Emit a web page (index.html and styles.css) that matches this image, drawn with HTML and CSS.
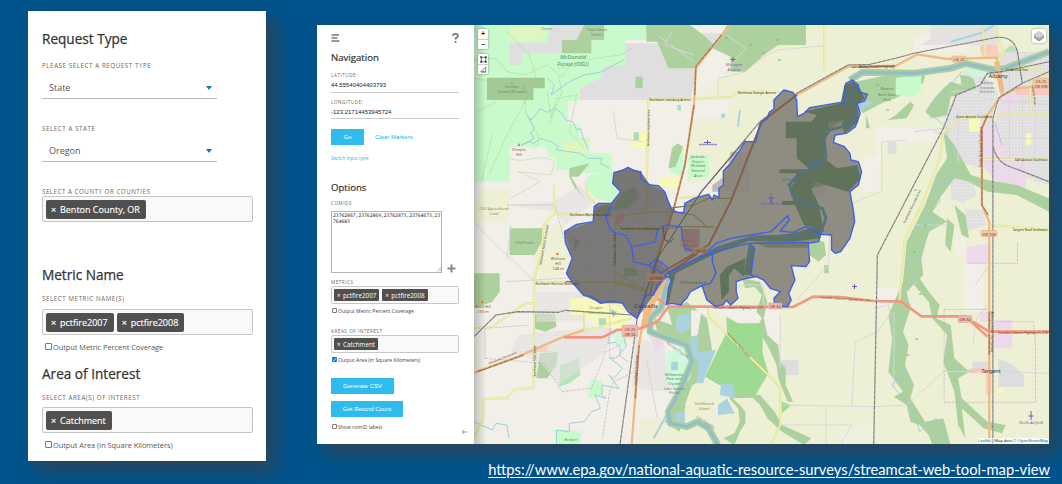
FILE: index.html
```html
<!DOCTYPE html>
<html lang="en">
<head>
<meta charset="utf-8">
<title>StreamCat Web Tool</title>
<link rel="stylesheet" href="styles.css">
</head>
<body>
<main class="slide">
  <section class="card">
    <h2 class="card-title">Request Type</h2>
    <div class="label l1">PLEASE SELECT A REQUEST TYPE</div>
    <div class="select"><span>State</span><i class="caret"></i></div>
    <div class="label l2">SELECT A STATE</div>
    <div class="select"><span>Oregon</span><i class="caret"></i></div>
    <div class="label l3">SELECT A COUNTY OR COUNTIES</div>
    <div class="tags"><span class="tag"><b>×</b>Benton County, OR</span></div>
    <h2 class="card-title t2">Metric Name</h2>
    <div class="label l4">SELECT METRIC NAME(S)</div>
    <div class="tags"><span class="tag"><b>×</b>pctfire2007</span><span class="tag"><b>×</b>pctfire2008</span></div>
    <div class="check"><i class="box"></i>Output Metric Percent Coverage</div>
    <h2 class="card-title t3">Area of Interest</h2>
    <div class="label l5">SELECT AREA(S) OF INTEREST</div>
    <div class="tags"><span class="tag"><b>×</b>Catchment</span></div>
    <div class="check"><i class="box"></i>Output Area (in Square Kilometers)</div>
  </section>

  <div class="right">
    <section class="app">
      <aside class="side">
        <div class="side-top">
          <svg width="9" height="8" viewBox="0 0 9 8"><path class="ico" d="M.5 1H8M.5 4H6.5M.5 7H8.5"/></svg>
          <svg width="7" height="10" viewBox="0 0 7 10"><path class="ico q" d="M.9 2.8C1 .3 6 .3 6 2.7C6 4.5 3.5 4.2 3.5 6.5M3.5 8V9.8"/></svg>
        </div>
        <h3 class="side-title">Navigation</h3>
        <div class="mini m1">LATITUDE:</div>
        <div class="value">44.55540404403793</div>
        <div class="mini m2">LONGITUDE:</div>
        <div class="value">-123.21714453945724</div>
        <div class="actions"><span class="btn go">Go</span><span class="link">Clear Markers</span></div>
        <div class="switch">Switch input type</div>
        <h3 class="side-title opt">Options</h3>
        <div class="mini m3">COMIDS</div>
        <div class="area-row">
          <div class="area"><span>23762867,23762869,23762873,23764673,23<br>764683</span><svg class="grip" width="6" height="6" viewBox="0 0 6 6"><path d="M1 5.5L5.5 1M3.5 5.5L5.5 3.5"/></svg></div>
          <svg class="plus" width="9" height="9" viewBox="0 0 9 9"><path d="M4.5 .5V8.5M.5 4.5H8.5"/></svg>
        </div>
        <div class="mini m4">METRICS</div>
        <div class="stags"><span class="stag"><b>×</b>pctfire2007</span><span class="stag"><b>×</b>pctfire2008</span></div>
        <div class="scheck"><i class="sbox"></i>Output Metric Percent Coverage</div>
        <div class="mini m5">AREAS OF INTEREST</div>
        <div class="stags"><span class="stag"><b>×</b>Catchment</span></div>
        <div class="scheck"><i class="sbox on"><svg width="5" height="5" viewBox="0 0 5 5"><path d="M.8 2.5L2 3.8L4.2 1.1"/></svg></i>Output Area (in Square Kilometers)</div>
        <span class="btn csv">Generate CSV</span>
        <span class="btn rec">Get Record Count</span>
        <div class="last"><div class="scheck"><i class="sbox"></i>Show comID labels</div>
        <svg class="back" width="7" height="6" viewBox="0 0 7 6"><path d="M6.5 3H1M3.3 .7L1 3L3.3 5.3"/></svg></div>
      </aside>

      <div class="map">
        <svg class="map-svg" width="575" height="419" viewBox="0 0 575 419">
          <defs>
            <pattern id="orchard" width="8" height="9" patternUnits="userSpaceOnUse"><rect width="8" height="9" fill="#9fdb93"/><circle cx="3" cy="3" r="1.4" fill="#84c97d"/></pattern>
            <pattern id="streets" width="17" height="19" patternUnits="userSpaceOnUse"><rect width="17" height="19" fill="#dddcdc"/><path d="M0 4H17M4 0V19M12 0V19M0 13H17" stroke="#efeeed" stroke-width="1.2"/></pattern>
            <pattern id="darkst" width="16" height="18" patternUnits="userSpaceOnUse"><path d="M0 5H16M5 0V18M12 0V18M0 13H16" stroke="#9a9896" stroke-width="1" fill="none"/></pattern>
            <linearGradient id="edge"><stop offset="0" stop-color="#000" stop-opacity=".2"/><stop offset="1" stop-color="#000" stop-opacity="0"/></linearGradient>
          </defs>
          <g class="geo" transform="scale(.36671 .33333)">
            <rect width="1568" height="1260" fill="#f2efe9"/>
            <!-- farmland -->
            <g fill="#eef0d5">
              <path d="M690 0H1568V1260H500L560 1160L590 1040L620 940L640 850L560 840L700 470L580 500L590 330L610 215L690 140Z"/>
              <path d="M160 610L245 590L270 700L230 760H160Z"/><path d="M30 490H95V590H0V530Z"/>
              <path d="M455 1180H520V1260H440Z"/>
            </g>
            <g fill="#f2efe9">
              <path d="M600 225H700L690 280H600ZM1095 305H1260L1250 350H1110L1105 500H1060V395H1100ZM640 850H835V1000L780 930L700 880ZM560 480L680 460V500L570 560ZM1100 790H1160V850H1100ZM1340 690H1390V860H1340ZM1260 20H1350V80H1200V40Z"/>
              <path d="M1310 690H1345V620H1310ZM1000 1200H1090V1260H1000Z" opacity=".5"/>
            </g>
            <!-- forest reserve -->
            <path fill="#c8facc" d="M0 0H520V45H415V125H355V190H288V228H256V298H288V340H315V385H375V445H300V435H225V395H200V365H97V470H0Z"/>
            <path fill="#c8facc" d="M315 450L385 440L380 480L405 500L390 535L330 520L300 480Z"/>
            <g fill="#e0dfdf">
              <path d="M210 0H300V45H245V85H130V120H97V52H200ZM412 55H545L600 25H680L605 140L590 225H288V190L345 160L355 125L412 120Z"/>
              <path d="M1245 0H1430V60H1220L1245 40ZM1255 235H1300V280H1240ZM1380 0H1410V80H1380Z" opacity=".8"/>
            </g>
            <path fill="#def6c0" d="M97 0H200V30L160 52H97ZM245 350L310 345V385H240Z"/>
            <path fill="#add19e" d="M300 0H355V45H320V85H240V45H280ZM470 0H590L625 30L655 60L600 130H530L500 50H470ZM690 0H905V60H830L790 90L740 140H700V95L650 70ZM440 155H460V190H440ZM97 610H190V640L165 690H97ZM0 745H70V800L50 830L0 850ZM163 865L220 868L225 905L195 920L163 910ZM180 985L230 980L225 1020L200 1060H170Z"/>
            <path fill="#a3ca94" d="M35 158H193V190H162V225H35Z"/>
            <path fill="#add19e" d="M260 430L315 415L285 455H265L300 520L275 490L260 455Z"/>
            <path fill="#b5e3b5" d="M235 1020L285 1000L290 1050L260 1075L232 1085ZM1430 90L1465 60L1485 75V130H1430Z"/>
            <path fill="#c8facc" d="M540 360L570 370V455L535 440ZM585 390H640V460H585ZM320 1060L350 1070V1110L310 1120ZM218 1215L290 1218V1260H230Z"/>
            <path fill="#add19e" d="M540 370L555 355L570 365L550 425L530 430Z"/>
            <!-- residential areas -->
            <path fill="url(#streets)" opacity=".6" d="M90 540L215 530L290 480L330 530L250 600L220 560ZM120 930L380 900L360 980L230 1080L180 1010L100 980ZM440 940L520 960L530 1100L430 1090ZM170 800H300V890H170Z"/>
            <path fill="url(#streets)" d="M1340 130L1390 150L1430 200L1400 350L1380 430L1320 410L1280 300L1310 220ZM1430 80H1568V480L1440 440L1420 300L1440 180ZM1300 460L1360 455L1370 510L1335 535L1300 520ZM1340 550L1390 555L1395 600L1340 620Z"/>
            <path fill="#dedddd" d="M1430 1000L1470 1020L1500 1050V1085H1430ZM1360 1010H1405V1040H1360ZM1128 350H1152V388H1128ZM835 1005H885V1050H840Z"/>
            <path fill="#ecd9e9" d="M1385 300H1430L1450 390H1505V490L1440 480L1390 430ZM1440 195L1490 215L1440 280ZM1343 665L1405 655V715H1343ZM1420 885H1468V970H1420ZM1380 860H1410V890H1380ZM475 930L520 950L500 980Z"/>
            <path fill="#ffc0b0" opacity=".7" d="M1380 60H1430V100H1385ZM1470 185H1568V210H1480ZM1350 1030H1405V1045H1350ZM1395 1030H1410V1110H1395ZM165 965H200V980H165ZM440 840L470 810L500 850L470 870Z"/>
            <path fill="#f8f8bd" d="M430 320H475V370H430ZM1350 280H1380V320H1350ZM260 820H400L430 870L400 910L340 905L300 870H260ZM500 455H560V490H510ZM1505 325H1520V360H1505ZM1425 1090H1445V1102H1425Z"/>
            <path fill="#aadbc3" d="M435 322H450V345H435ZM340 880H360V900H340ZM555 240H564V256H555ZM370 850L390 860L380 880Z"/>
            <!-- riparian woods -->
            <g fill="#add19e">
              <path d="M1040 170L1150 145L1230 150L1225 175L1150 220L1120 230L1060 265L1040 230Z"/>
              <path d="M1115 295L1150 270L1190 230L1200 240L1180 280L1130 285ZM1070 270L1080 310H1068Z"/>
              <path d="M1255 220L1280 190L1300 170L1330 180L1325 150L1360 155L1370 190L1320 210L1300 215L1290 270L1250 280L1230 260Z"/>
              <path d="M1280 320L1310 360L1355 450L1400 465L1480 480L1568 520V560L1480 510L1400 500L1350 470L1310 460L1270 520L1250 560L1290 590L1240 620L1220 700L1225 750L1180 800L1190 850L1170 920L1185 960L1175 1020L1200 1080L1190 1120L1230 1190L1280 1180L1300 1260H1250L1240 1230L1215 1200L1190 1190L1180 1140L1145 1115L1170 1100L1130 1040L1140 940L1130 870L1170 770L1180 650L1230 540L1260 450L1290 400Z"/>
              <path d="M1215 760L1240 800L1270 840L1260 880L1300 900L1310 1000L1350 1040L1320 1060L1330 1120L1400 1190L1450 1200L1440 1225L1390 1210L1330 1150L1340 1240L1320 1200L1310 1100L1280 1010L1290 930L1250 880L1240 830L1200 780Z"/>
              <path d="M1310 540L1340 570L1350 640L1330 630ZM1290 580L1310 600L1300 680L1285 660Z"/>
              <path d="M915 640L955 650L960 690L940 710L915 690ZM955 720H967V745H955Z"/>
              <path d="M525 840L550 850L580 830L635 880L650 980L630 1050L600 1080L580 1130L560 1220L520 1190L570 1090L590 1000L560 960L500 920L490 880L540 900Z"/>
              <path d="M730 760L780 770L800 830L790 880L800 930L830 960L835 1010L850 1030L850 1080L870 1130L855 1130L830 1060L825 1020L800 960L770 910L785 880L770 860L785 810L765 785L740 790Z"/>
              <path d="M700 1100L780 1110L820 1160L840 1200L920 1240L900 1260L840 1220L800 1180L780 1140L760 1118L705 1120L725 1140L740 1160V1195L725 1220L710 1260L680 1240L710 1225L725 1190L720 1150L695 1120Z"/>
            </g>
            <path fill="#c8facc" d="M1150 160L1220 140V200L1195 215L1150 210Z"/>
            <path fill="#f2efe9" d="M592 855L620 860L610 930L592 935ZM600 1080L650 1040L700 1100L695 1150L660 1170L590 1180L585 1130Z"/>
            <path fill="#eef0d5" d="M595 1080L640 1060L690 1110L660 1140V1190L600 1185L575 1140Z"/>
            <path fill="url(#orchard)" d="M688 875L720 895H787V985L803 1045L765 1115L700 1100L630 1055L665 975L690 920Z"/>
            <path fill="#9edc90" d="M838 1130L865 1140L840 1165Z"/>
            <path fill="#cff8dc" d="M375 920H415V960H390ZM530 980L575 960L595 1010L590 1060L560 1100L520 1060Z"/>
            <path fill="#cff5dc" d="M1345 110L1410 125L1400 150L1360 160L1340 140Z"/>
            <!-- lakes -->
            <path fill="#aad3df" d="M555 870L590 865L590 910L565 925L550 910ZM585 945L610 930V980L660 975L635 1040L625 1075H608L612 1010L590 980ZM675 1075L710 1080V1120L670 1110ZM665 1140L690 1120L710 1165L665 1170ZM545 1165L575 1160V1195L550 1190ZM538 1010H556V1035H538ZM674 266H685V278H674ZM1045 230L1060 215L1085 235L1050 260Z"/>
            <path class="w2" d="M725 255L720 305"/>
            <!-- small contour trails -->
            <g class="trail">
              <path d="M0 105L60 100L90 140L140 150L200 120L240 155L270 110M55 190L100 220L140 225L90 330L40 450M140 225C130 300 210 330 160 370M200 200L210 280L225 220L280 210L260 320L300 370M10 260L60 230M50 330L20 470M97 400C140 420 180 380 220 410L210 450L120 440L180 470L100 520M90 20L150 90L170 160M0 160L50 170M230 130L330 100L400 90L430 70M230 150L240 200L205 300"/>
            </g>
            <g class="minor">
              <path d="M500 30L600 110M540 20L520 60L600 90M690 30L740 70L700 120M665 220V160L700 152L740 140L790 95L830 75L955 62M1112 350V500L1060 520L1015 545L970 620L967 720L880 825M1112 350L1180 345M1240 310L1280 330M1200 320L1280 310M835 1140L1090 1145L1180 1140L1280 1040L1405 1038L1568 1045M1090 850L1130 840L1135 870L1100 920L1040 950L1030 1145M960 1145V1260M835 1200H1030L1000 1260M1145 860V1090M370 770V1000M470 1000L500 1180M0 590L50 650L100 700L165 770M380 260L390 340L460 350M90 700L100 600M1368 780L1405 720M1360 960L1370 880L1400 840M720 780H790V840M835 870V1030"/>
              <path d="M1200 600L1290 600M1320 410V250M1385 220L1568 240M1460 140V400M1495 160V440M1530 140V400M1440 230H1568M1440 340H1568M1300 200L1420 190"/>
            </g>
            <!-- municipal boundaries -->
            <path class="bound" d="M90 540H220L250 660M1282 853H1405V750M1282 853V1132H1531V950L1525 890H1425M1345 715H1482V650M30 1000V910L150 900M30 1000L190 1015L240 1100L320 1090L360 980L400 960M440 1040L380 1070L370 1100L350 1240M90 770L245 760L330 740"/>
            <!-- waterways -->
            <path class="w1" d="M200 160L220 180L210 210L260 170L300 150L350 140L380 120L410 105M145 270L155 285L165 275L180 250L200 262L220 250L240 265L250 285L270 290L280 315L290 310L300 345L310 370M130 360L150 350L165 355L180 340L210 350L230 365L225 375L260 380L290 385L310 400L350 400L345 415L370 430M150 280L165 310L155 325L165 340L130 360"/>
            <path class="w1" d="M372 910L365 955L385 952L400 970L398 990L385 1000L370 998L405 1030L380 1060L368 1050L395 1090L370 1085L350 1080L348 1110L360 1120L330 1110L345 1150L320 1160L300 1190L260 1195L260 1220L225 1215V1260M0 1190L50 1215L60 1195L90 1200L95 1240M410 940L415 965L395 990L420 1010"/>
            <path class="w1" d="M1330 140L1300 180L1260 230L1240 260L1290 310L1290 350L1310 420L1290 480L1260 470L1270 530L1210 610L1260 570L1210 700L1180 720L1210 760L1160 810L1190 840L1140 900L1175 940L1140 990L1175 1040L1140 1080L1200 1160L1215 1220L1260 1180L1290 1250M1315 1030L1365 1040M1420 290L1440 360"/>
            <path class="riverbank" d="M1025 165L1060 142L1200 145L1300 130L1340 115L1420 135L1450 130L1568 80"/>
            <path class="river" d="M1025 165L1060 142L1200 145L1300 130L1340 115L1420 135L1450 130L1568 80"/>
            <path class="w2" d="M1300 50L1380 25L1420 0M530 1160L490 1240"/>
            <path class="riverbank" d="M530 750L510 850L480 880L480 920L540 945L580 960L595 1010L560 1100L530 1160L535 1195L580 1205L610 1190L640 1210L665 1260"/>
            <path class="river" d="M530 750L510 850L480 880L480 920L540 945L580 960L595 1010L560 1100L530 1160L535 1195L580 1205L610 1190L640 1210L665 1260"/>
            <!-- yellow secondary roads -->
            <g>
              <g class="ycase"><path d="M475 225L590 222L700 215L720 200H835M475 225L472 450L470 500"/><path d="M955 0V135M638 850L640 875L835 1085V1200L810 1260M190 600L185 680L165 760L162 1090L110 1092L90 1120L25 1122V1180L0 1240M190 600L220 565L380 575M220 565L218 480M165 772L290 770L380 780L470 810M300 915V860M245 935L340 905L430 880M0 910L50 905L140 835L160 835M305 475L310 510L335 540M1385 0L1395 80L1390 100M1420 0L1445 85L1425 110M1160 830L1175 640L1220 540L1270 400L1280 325L1330 280L1440 270H1568M1385 403H1568M1405 600L1470 605L1568 615M1450 140L1530 125L1568 160M1513 140L1520 255M560 520L640 510"/></g>
              <g class="yroad"><path d="M475 225L590 222L700 215L720 200H835M475 225L472 450L470 500"/><path d="M955 0V135M638 850L640 875L835 1085V1200L810 1260M190 600L185 680L165 760L162 1090L110 1092L90 1120L25 1122V1180L0 1240M190 600L220 565L380 575M220 565L218 480M165 772L290 770L380 780L470 810M300 915V860M245 935L340 905L430 880M0 910L50 905L140 835L160 835M305 475L310 510L335 540M1385 0L1395 80L1390 100M1420 0L1445 85L1425 110M1160 830L1175 640L1220 540L1270 400L1280 325L1330 280L1440 270H1568M1385 403H1568M1405 600L1470 605L1568 615M1450 140L1530 125L1568 160M1513 140L1520 255M560 520L640 510"/></g>
            </g>
            <!-- orange primary roads -->
            <path class="orange" d="M700 0L605 125L600 240L575 420L545 550L490 720L470 830L450 960L430 1260M640 660L700 530L750 400L785 290L880 210L1020 125L1150 122L1210 88L1290 102L1425 98L1435 170L1440 210L1400 270L1385 310V540L1405 590V1260M1440 210L1480 190L1568 180M0 1043L120 995L245 935L300 915M500 750L640 660"/>
            <path class="orange wide" d="M1425 110L1440 200M490 820L460 910M520 765L490 830"/>
            <path class="brown" d="M675 30L605 125L602 210M600 240L575 420L545 550L490 720L480 810M790 290L880 210M1030 127L1150 122M10 1040L135 990M1400 270L1385 310V540L1402 570M1405 860V990M440 1120L450 960"/>
            <path class="red" d="M245 937H350L390 915L455 910L500 890L530 845H640L870 846L925 815L1000 816L1090 828L1165 830L1220 874H1340L1400 935M1360 890L1405 920H1568M525 840L500 820"/>
            <!-- railways -->
            <path class="rail" d="M0 935L60 870L120 860L230 862L250 856L430 870L445 880M398 1260L445 880L500 700L620 500L780 290L880 205L1020 120L1080 118L1150 100L1200 85L1420 38Q1470 30 1482 80L1495 175M1568 110L1440 140L1400 145L1380 180L1315 210L1280 310L1100 690L1090 1260M1415 1260V280L1430 220L1495 175L1568 140M1415 360Q1420 400 1450 420L1568 470"/>
            <path class="rail-dash" d="M0 935L60 870L120 860L230 862L250 856L430 870L445 880M398 1260L445 880L500 700L620 500L780 290L880 205L1020 120L1080 118L1150 100L1200 85L1420 38Q1470 30 1482 80L1495 175M1568 110L1440 140L1400 145L1380 180L1315 210L1280 310L1100 690L1090 1260M1415 1260V280L1430 220L1495 175L1568 140M1415 360Q1420 400 1450 420L1568 470"/>
            <!-- catchments -->
            <path fill="#8f8d82" d="M382 442L402 438L420 427L435 438L455 440L455 462L480 480L503 482L520 500L530 530L540 555L555 562H572L575 535L600 520L640 508L650 525L655 510L668 518V490L680 480V438L700 415L740 350H768L780 295L800 280L805 262L818 252V225L845 195L870 202L880 225L882 275L900 265L915 248L1000 232L1008 240L1014 175L1032 165L1048 180L1050 200L1073 208L1065 228L1045 235L1053 265L1040 305L1015 325L985 330L980 352L1010 365L1025 385L1028 405L1048 410L1057 440L1048 480L1025 500L1035 560L1038 590L1025 640L1000 680L985 685L975 675L975 630L945 628L940 650L912 655L915 710L905 725L865 722L875 765L858 805L865 825L855 845L820 843L818 820L835 800L808 790L790 765L770 755L735 762L715 770V800L720 820L700 840L688 825L680 838L660 845L635 825L622 782L590 800L580 820L570 830L565 840L540 835L525 838L530 790L540 760L525 755L500 780L490 810L470 810L445 880L420 860L405 835L375 828L345 835L320 815L300 812L270 775L252 745L268 700L250 655L247 620L280 598L325 590L328 545L340 535L375 535L400 500L378 475Z"/>
            <path fill="#787776" d="M382 442L420 427L455 440L480 480L520 500L540 555L500 700L530 745L490 810L445 880L405 835L345 835L300 812L252 745L268 700L247 620L325 590L328 545L375 535L400 500L378 475Z"/>
            <path fill="url(#darkst)" opacity=".32" d="M330 590L530 540L500 700L490 810L445 870L345 825L260 745L268 620Z"/>
            <g fill="#60725a">
              <path d="M850 290H920L935 270L900 260L1000 235L1010 180L1035 170L1050 185L1065 220L1045 240L1048 290L1010 325L1000 290L960 320L955 400L990 430L1045 420L1055 460L1020 500L960 480L920 490L940 540L955 620L900 600L875 540H840V528H870L865 490L885 445H833V433H915L880 400V340H850Z"/>
              <path d="M530 745L640 680L750 640L870 625L945 600L945 640L870 650L750 648L650 690L550 745L530 835H525L535 770ZM670 750L690 725L740 700L735 755L710 730L695 750V800L675 825ZM750 655L765 670L755 750L735 750Z"/>
              <path d="M400 505L440 485L450 520L420 550L380 555ZM350 540L380 545L370 570L330 560ZM410 730L440 730L450 750L410 755ZM270 640L290 645L275 680ZM760 650H910V668H800Z" opacity=".65"/>
            </g>
            <path fill="#8a837b" d="M965 290L1010 285L1000 310L970 320ZM930 470L960 480L950 520L920 510ZM700 380H750V500H650V480L690 450Z" opacity=".5"/>
            <path fill="#885f63" opacity=".6" d="M385 575L410 565V585L390 598ZM565 612H615V680H575Z"/>
            <path class="inwater" d="M1032 170L1028 230L1045 265L1025 300L970 315L955 340L960 400L930 430L885 445L860 480L870 515L900 535L950 550L960 580L945 625L860 635L760 635L660 670L535 745M755 660L748 745"/>
            <path fill="#56717a" d="M915 405L945 400L940 425L910 430Z"/>
            <path class="inroad" d="M385 575L470 562L540 560L600 570L640 610M385 790V590L400 610H520M385 770L470 790M470 480L472 530L460 560M480 740L530 610L570 605H655M250 770L380 772L475 800M530 550L600 540L640 520H700M385 740L470 800"/>
            <path class="inorange" d="M545 550L500 700L480 810M500 750L640 660L700 530L785 290L880 210M528 745L610 685"/>
            <path class="inrail" d="M445 880L500 700L620 500L740 346M515 600L520 645L535 652L545 640"/>
            <path class="catch" d="M382 442L402 438L420 427L435 438L455 440L455 462L480 480L503 482L520 500L530 530L540 555L555 562H572L575 535L600 520L640 508L650 525L655 510L668 518V490L680 480V438L700 415L740 350H768L780 295L800 280L805 262L818 252V225L845 195L870 202L880 225L882 275L900 265L915 248L1000 232L1008 240L1014 175L1032 165L1048 180L1050 200L1073 208L1065 228L1045 235L1053 265L1040 305L1015 325L985 330L980 352L1010 365L1025 385L1028 405L1048 410L1057 440L1048 480L1025 500L1035 560L1038 590L1025 640L1000 680L985 685L975 675L975 630L945 628L940 650L912 655L915 710L905 725L865 722L875 765L858 805L865 825L855 845L820 843L818 820L835 800L808 790L790 765L770 755L735 762L715 770V800L720 820L700 840L688 825L680 838L660 845L635 825L622 782L590 800L580 820L570 830L565 840L540 835L525 838L530 790L540 760L525 755L500 780L490 810L470 810L445 880L420 860L405 835L375 828L345 835L320 815L300 812L270 775L252 745L268 700L250 655L247 620L280 598L325 590L328 545L340 535L375 535L400 500L378 475Z"/>
            <path class="catch" d="M375 540L360 575L370 610L380 622L415 632L430 665L465 658L495 650L500 615L525 600L565 605L568 640L575 670L610 682L635 680L660 655L700 640L810 620L855 572L860 585L835 618L870 622L905 605L945 628M430 665L435 710L475 722L498 702L525 725L530 745L580 715L650 682L750 655L912 652M650 685V710L660 745L645 775L622 782M750 655L765 670L755 750L770 755M475 722L500 735L525 755"/>
          </g>
          <rect width="12" height="419" fill="url(#edge)"/>
          <!-- place names -->
          <g class="txt">
            <g class="green" font-size="5.8"><text x="99" y="34">McDonald</text><text x="99" y="41">Forest (OSU)</text></g>
            <g class="green small"><text x="413" y="65">Bowers</text><text x="413" y="71">Rock State</text><text x="413" y="76">Park</text><text x="224" y="133">Jackson-</text><text x="224" y="137.7">Frazier</text><text x="224" y="142.4">Wetland</text><text x="224" y="147.1">Natural</text><text x="224" y="151.8">Area</text><text x="200" y="350.5">Willamette</text><text x="200" y="355.2">Park and</text><text x="200" y="360">Crystal</text><text x="200" y="364.7">Lake Sports</text><text x="200" y="369.4">Fields</text><text x="97" y="416">Herbert</text></g>
            <g class="gray small"><text x="73" y="4.500">Dunn</text><text x="123" y="6">Tract State</text><text x="123" y="11">Forest</text><text x="38" y="63">Dunker</text><text x="38" y="68">Forest (Private)</text><text x="50" y="219">Old Pond</text><text x="513" y="59">Albany</text><text x="513" y="63.7">historic</text><text x="513" y="68">districts</text></g>
            <g class="olive small"><text x="20" y="185">OSU Agricultural</text><text x="20" y="190">Land</text><text x="230" y="380">Stahlbusch</text><text x="230" y="385">Island</text><text x="122" y="284">Oregon</text><text x="128" y="289">State University</text></g>
            <text class="infarm" x="219" y="259">OSU Farmland</text>
            <g class="purple small"><text x="260" y="41">McLagan</text><text x="260" y="46">Airstrip</text><text x="298" y="180">Winn Airfield</text><text x="557" y="399">Grells Airfield</text></g>
            <g class="blue small"><text x="317" y="156">Willamette</text><text x="317" y="161">River</text></g>
            <g class="peak small"><text x="45" y="126">Dimple</text><text x="45" y="131">Hill</text><text x="84" y="235">Witham</text><text x="84" y="240">Hill</text><text x="84" y="245">148 m</text><text x="9" y="283">Bald Hill</text><text x="9" y="288">230 m</text></g>
            <g class="place"><text x="524" y="53">Albany</text><text x="172" y="283">Corvallis</text><text x="517" y="348" font-size="5">Tangent</text></g>
            <g class="road"><text x="196" y="76">Northwest Lewisburg Avenue</text><text x="283" y="68.5">Northeast Granger Avenue</text><text x="116" y="191">Northwest Walnut Boulevard</text><text x="166" y="205">Northwest Circle Boulevard</text><text x="83" y="260">Northwest Harrison Boulevard</text><text x="500" y="93">Queen Avenue Southwest</text><text x="557" y="136">34th Avenue Southeast</text><text x="556" y="206">Tangent Road Southwest</text><text x="543" y="46">1st Avenue East</text><text class="tan" x="403" y="42.5">Albany-Corvallis Highway</text><text class="tan" x="264" y="284">Corvallis-Lebanon Highway no. 210</text><text class="tan" transform="translate(371 275) rotate(4)">Corvallis-Lebanon Highway no. 210</text><text class="tan" x="549" y="309">Corvallis-Lebanon Highway no. 210</text>
              <text transform="translate(175.5 103) rotate(-89)">Northwest Highland Drive</text><text transform="translate(71 220) rotate(-80)">Northwest Walnut Boulevard</text><text transform="translate(61.5 336) rotate(-90)">Southwest 53rd Street</text><text transform="translate(264 321) rotate(47)">Southeast Peoria Road</text><text transform="translate(439 182) rotate(-64)">Southwest Riverside Drive</text><text transform="translate(142 224) rotate(-90)">Northwest 29th Street</text><text class="tan" transform="translate(163 345) rotate(-87)">Southwest 3rd Street</text><text class="tan" transform="translate(29 334) rotate(-22)">Philomath Boulevard</text><text class="tan" transform="translate(516.5 307) rotate(90)">Albany-Junction City Highway</text><text class="tan" transform="translate(508 122) rotate(-90)">Pacific Boulevard Southwest</text><text transform="translate(559 70) rotate(83)">Waverly Drive</text><text class="bord" transform="translate(203 326) rotate(35)">Benton County</text><text class="bord" transform="translate(231 398) rotate(33)">Linn County</text></g>
            <g class="hw"><rect x="478" y="31" width="14" height="6"/><text x="485" y="36">US 20</text><rect x="507" y="205.5" width="16" height="6"/><text x="515" y="210.5">OR 99E</text><rect class="r" x="484" y="290.5" width="14" height="7"/><text x="491" y="296">OR 34</text><rect class="r" x="148" y="300" width="16" height="12"/><text x="156" y="305.5">US 20</text><text x="156" y="310.5">OR 34</text><rect class="r" x="294" y="278" width="14" height="6"/><text x="301" y="283">OR 34</text><rect x="559" y="53" width="16" height="10"/><text x="567" y="57.5">US 20</text><text x="567" y="62.5">OR 99E</text><rect class="d" x="174" y="249.5" width="16" height="6"/><text x="182" y="254.5">OR 99W</text><rect class="d" x="220" y="223" width="13" height="5"/><text x="227" y="227.5">US 20</text></g>
            <g class="peak small"><text x="214" y="217">Hewlett</text><text x="214" y="222">Packard</text></g>
          </g>
          <g class="plane"><path d="M297 168V178M293.5 173H300.5M296 177H298.5"/><path d="M259 32V37M256.5 34.5H261.5M233.5 115V120M230 117.5H237M557 386V395M554.5 391H559.5M380.5 259V264M378 261.5H383"/></g>
          <path d="M225 119.500H243" stroke="#9c91c4" stroke-width="1.5"/>
          <path d="M45 118L46.5 121H43.5ZM83.500 227L85 230H82ZM8 275L9.500 278H6.500Z" fill="#db7638"/>
          <!-- tree marks -->
          <g class="trees"><path d="M275 20h3m10 8h3m-40-15h3m48 2h3m-1 20h3M36 58h3m9 5h3M402 60h3m7 25h3M440 165h3m7 35h3m-14 27h3m3 42h3m-7 45h3m-12 16h3"/></g>
        </svg>
        <div class="zoom"><span>+</span><span>−</span></div>
        <div class="tools">
          <span><svg width="8" height="8" viewBox="0 0 8 8"><path d="M1.500 1.500H6.500V6.500H1.500Z"/><path class="nodes" d="M.3 .3H2.500V2.500H.3ZM5.500 .3H7.700V2.500H5.500ZM.3 5.500H2.500V7.700H.3ZM5.500 5.500H7.700V7.700H5.500Z"/></svg></span>
          <span><svg width="8" height="8" viewBox="0 0 8 8"><path d="M1 6.500L6.500 1V6.500ZM1 7H7"/></svg></span>
        </div>
        <div class="layers"><svg width="12" height="12" viewBox="0 0 12 12"><path fill="#999" d="M1 6L6 9L11 6V8L6 11.500L1 8Z"/><path fill="#b5b5b5" d="M1 4L6 7L11 4V6.500L6 9.500L1 6.500Z"/><path fill="#d2d2d2" d="M6 .8L11 4L6 7.200L1 4Z"/></svg></div>
        <div class="attr"><b>Leaflet</b> | Map data © <b>OpenStreetMap</b></div>
      </div>
    </section>
    <div class="url">https://www.epa.gov/national-aquatic-resource-surveys/streamcat-web-tool-map-view</div>
  </div>
</main>
</body>
</html>
```
FILE: styles.css
```css
* { box-sizing: border-box; }
body { margin: 0; font-family: "Open Sans", sans-serif; overflow: hidden; }
h2, h3 { margin: 0; font-weight: 400; }
.slide { width: 1062px; height: 484px; background: #00528a; display: flex; align-items: flex-start; padding-left: 28px; gap: 51px; }
.card { width: 238px; height: 450px; margin-top: 11px; padding: 15px 13px 0 14px; background: #fff; color: #333; box-shadow: 9px 9px 15px 1px #29465c; flex: none; }
.card-title { height: 24px; line-height: 25px; font-size: 13.6px; color: #333; -webkit-text-stroke: .25px #333; white-space: nowrap; }
.label { height: 10px; line-height: 10px; font-size: 6.2px; letter-spacing: .58px; color: #666; white-space: nowrap; }
.l1 { margin-top: 11px; }
.l2 { margin-top: 25px; }
.l3 { margin-top: 25px; height: 9px; letter-spacing: .52px; }
.l4 { margin-top: 8px; margin-bottom: 5px; }
.l5 { margin-top: 8px; margin-bottom: 5px; }
.select { width: 175px; height: 21px; margin-top: 7px; padding: 0 5px 1px 7px; border-bottom: 1px solid #bbb; display: flex; align-items: center; justify-content: space-between; font-size: 9px; color: #555; }
.caret { border: 3px solid transparent; border-top: 4px solid #0b7abf; border-bottom: 0; }
.tags { height: 26px; border: 1px solid #c4c4c4; border-radius: 2px; background: #f9f9f7; padding: 3px; display: flex; gap: 3px; }
.tag { height: 19px; padding: 0 6px 0 5px; border-radius: 2px; background: #505050; color: #fff; display: flex; align-items: center; font-size: 9px; white-space: nowrap; -webkit-text-stroke: .15px #fff; }
.tag b { width: 9px; font-weight: 400; font-size: 9px; }
.t2 { margin-top: 40px; }
.t3 { margin-top: 5px; }
.check { height: 18px; margin-top: 3px; padding-left: 3px; display: flex; align-items: center; gap: 1px; font-size: 7.35px; color: #555; white-space: nowrap; }
.box { width: 7px; height: 7px; border: 1px solid #777; border-radius: 1px; margin-bottom: 1px; }
.l5 + .tags { margin-top: -1px; }

.right { width: 733px; padding-top: 25px; flex: none; }
.app { width: 732px; height: 419px; display: flex; background: #fff; box-shadow: 9px 9px 15px 1px #29465c; }
.side { width: 157px; height: 419px; padding: 7px 15px 0 13px; flex: none; color: #333; }
.side > * { margin-left: 1px; }
.side-top { height: 11px; display: flex; align-items: center; justify-content: space-between; }
.ico { stroke: #777; stroke-width: 1.4; fill: none; }
.q { stroke-width: 1.8; }
.side-title { height: 16px; line-height: 16px; margin-top: 7px; font-size: 9.6px; -webkit-text-stroke: .2px #333; }
.mini { height: 8px; line-height: 8px; font-size: 4.6px; letter-spacing: .54px; color: #666; white-space: nowrap; }
.m1 { margin-top: 5px; }
.m2 { margin-top: 5px; }
.m3 { margin-top: 3px; }
.m4 { margin-top: 5px; }
.m5 { margin-top: 11px; }
.value { height: 14px; line-height: 13px; padding-bottom: 1px; border-bottom: 1px solid #ccc; font-family: "Liberation Sans", sans-serif; font-size: 6px; color: #222; }
.m2 + .value { height: 13px; }
.actions { display: flex; align-items: center; margin-top: 10px; gap: 11px; }
.btn { display: flex; align-items: center; justify-content: center; height: 16px; background: #2fbbed; color: #fff; font: 6px "Liberation Sans", sans-serif; white-space: nowrap; }
.go { width: 33px; }
.link { font: 6px "Liberation Sans", sans-serif; color: #22b5ea; }
.switch { margin-top: 8px; height: 10px; line-height: 10px; font-size: 4.7px; color: #22b5ea; }
.side .opt { margin-top: 17px; }
.area-row { display: flex; align-items: flex-end; gap: 5px; margin-top: 4px; }
.area { width: 111px; height: 62px; border: 1px solid #b3b3b3; padding: 1px 0 0 1px; font: 4.7px/6px "DejaVu Sans Mono", monospace; color: #222; display: flex; justify-content: space-between; white-space: nowrap; }
.area span { width: 103px; }
.grip { flex: none; align-self: flex-end; stroke: #888; stroke-width: .6; fill: none; }
.plus { stroke: #888; stroke-width: 2; }
.stags { width: 128px; height: 18px; border: 1px solid #c7c7c7; border-radius: 1.5px; background: #f9f9f7; padding: 2px; display: flex; gap: 3px; }
.stag { height: 12px; border-radius: 1px; background: #505050; color: #fff; padding: 0 3px; display: flex; align-items: center; font-size: 6.3px; white-space: nowrap; }
.stag b { width: 6px; font-weight: 400; }
.scheck { height: 11px; margin-top: 1px; padding-left: 1px; display: flex; align-items: center; gap: 1px; font-size: 5.05px; color: #444; white-space: nowrap; }
.sbox { width: 5px; height: 5px; border: .6px solid #777; border-radius: 1px; }
.sbox.on { background: #0b74e5; border: 0; display: flex; }
.sbox svg { fill: none; stroke: #fff; stroke-width: .8; }
.csv { width: 63px; margin-top: 13px; }
.rec { width: 72px; margin-top: 7px; }
.last { display: flex; justify-content: space-between; align-items: flex-start; margin-right: -9px; margin-top: 3px; }
.back { margin-top: 9px; fill: none; stroke: #888; stroke-width: .8; }

.map { width: 575px; height: 419px; position: relative; overflow: hidden; flex: none; }
.map-svg { display: block; }
.geo path { vector-effect: non-scaling-stroke; stroke-linejoin: round; }
.geo pattern path { vector-effect: none; }
.trail path { fill: none; stroke: #a8ca83; stroke-width: .7; stroke-dasharray: 1.5 1; }
.minor path { fill: none; stroke: #d9d7dc; stroke-width: 1; }
.bound { fill: none; stroke: #c3b5c3; stroke-width: .7; stroke-dasharray: 3 1; }
.w1 { fill: none; stroke: #98cbd8; stroke-width: .9; }
.w2 { fill: none; stroke: #aad3df; stroke-width: 2; }
.riverbank { fill: none; stroke: #add19e; stroke-width: 7; }
.river { fill: none; stroke: #94bdcb; stroke-width: 3.2; }
.ycase path { fill: none; stroke: #d5d794; stroke-width: 2; }
.yroad path { fill: none; stroke: #f2f2a4; stroke-width: 1.4; }
.orange { fill: none; stroke: #eebb87; stroke-width: 2.3; }
.wide { stroke-width: 5; }
.brown { fill: none; stroke: #a97855; stroke-width: 1.4; stroke-dasharray: 5 .5; }
.red { fill: none; stroke: #f1967f; stroke-width: 2.6; }
.rail { fill: none; stroke: #777; stroke-width: 1.1; }
.rail-dash { fill: none; stroke: #ccc; stroke-width: .6; stroke-dasharray: 2 3; }
.inwater { fill: none; stroke: #58717f; stroke-width: 2.7; }
.inroad { fill: none; stroke: #77764c; stroke-width: 1.2; }
.inorange { fill: none; stroke: #80604a; stroke-width: 2; }
.inrail { fill: none; stroke: #4d4b48; stroke-width: .9; }
.catch { fill: none; stroke: #405fe7; stroke-width: 1.4; }
.txt { font-family: "Noto Sans", sans-serif; text-anchor: middle; }
.small { font-size: 4px; }
.green { fill: #4f9164; font-style: italic; }
.gray { fill: #777e75; }
.olive { fill: #8f9560; font-style: italic; }
.infarm { fill: #5d6248; font-style: italic; font-size: 4px; }
.purple { fill: #765cac; font-style: italic; }
.blue { fill: #4c6f8f; font-style: italic; }
.peak { fill: #915a48; }
.place { font-size: 6px; fill: #333; }
.road { font-size: 3px; fill: #3c3b20; }
.tan { fill: #6b2e17; }
.bord { font-size: 3.8px; fill: #927aa4; }
.hw { font-size: 4px; fill: #754736; }
.hw rect { fill: #f3c9a3; stroke: #d29c7a; stroke-width: .4; rx: 1px; }
.hw .r { fill: #f1b8ad; }
.hw .d { fill: #92735e; }
.plane { fill: none; stroke: #7557ae; stroke-width: 1; }
.trees { fill: none; stroke: #83ae7c; stroke-width: 1; }
.zoom, .tools { position: absolute; left: 4px; width: 10px; background: #fff; border-radius: 1px; box-shadow: 0 0 2px #666; }
.zoom { top: 4px; height: 20px; }
.tools { top: 29px; height: 20px; }
.zoom span, .tools span { height: 10px; display: flex; align-items: center; justify-content: center; font: bold 7px/10px "Liberation Sans", sans-serif; color: #222; }
.zoom span + span, .tools span + span { border-top: .5px solid #ccc; }
.tools svg { width: 7px; height: 7px; fill: none; stroke: #555; stroke-width: .8; }
.tools .nodes { fill: #444; stroke: none; }
.layers { position: absolute; right: 3px; top: 4px; width: 14px; height: 14px; background: #fff; border-radius: 2px; box-shadow: 0 0 2px #777; display: flex; align-items: center; justify-content: center; }
.attr { position: absolute; right: 0; bottom: 0; height: 6px; padding: 0 1px; background: #ffffffb3; font: 4.3px/6px "Liberation Sans", sans-serif; color: #333; white-space: nowrap; }
.attr b { font-weight: 400; color: #0078a8; }
.url { margin-top: 16px; display: flex; justify-content: flex-end; height: 18px; line-height: 18px; font-family: Lato, sans-serif; font-size: 14.73px; color: #fff; text-decoration: underline; text-decoration-thickness: 1px; text-underline-offset: 2px; white-space: nowrap; }
```
